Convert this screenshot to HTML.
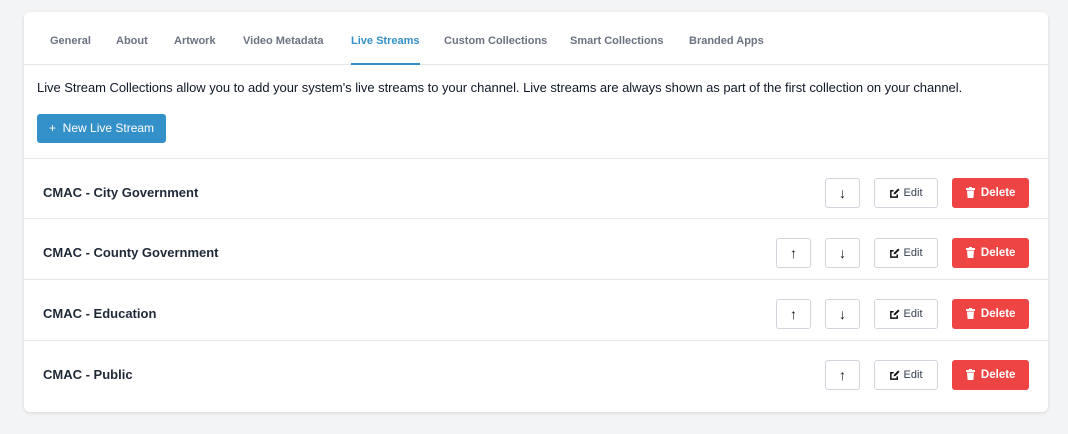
<!DOCTYPE html>
<html><head><style>
*{box-sizing:border-box;margin:0;padding:0}
body{width:1068px;height:434px;background:#f3f4f6;font-family:"Liberation Sans",sans-serif;position:relative;overflow:hidden}
.card{position:absolute;left:24px;top:12px;width:1024px;height:400px;background:#fff;border-radius:6px;box-shadow:0 1px 3px rgba(0,0,0,.12)}
.tabs{position:absolute;left:0;top:0;width:100%;height:53px;border-bottom:1px solid #e5e7eb}
.tab{position:absolute;top:23px;font-size:11px;font-weight:bold;color:#6b7280;white-space:nowrap}
.tab.act{color:#3490c9}
.uline{position:absolute;top:51px;left:327px;width:69px;height:2px;background:#3490c9}
.desc{position:absolute;left:13px;top:68px;font-size:13px;color:#111827;white-space:nowrap;letter-spacing:-0.04px}
.newbtn{position:absolute;left:13px;top:102px;width:129px;height:29px;background:#3490c9;border-radius:3px;color:#fff;font-size:12px;line-height:29px;padding-left:12px}
.row{position:absolute;left:0;width:100%;height:61px;border-top:1px solid #e5e7eb}
.name{position:absolute;left:19px;top:26px;font-size:13px;font-weight:bold;color:#1f2937}
.b{position:absolute;top:19px;height:30px;border:1px solid #d1d5db;border-radius:3px;background:#fff;font-size:11px;color:#374151;text-align:center;line-height:28px}
.ar{width:35px;font-size:14px;font-weight:bold;color:#111}
.up{left:752px}.dn{left:801px}
.ed{left:850px;width:64px}
.del{position:absolute;top:19px;left:928px;width:77px;height:30px;background:#ef4444;border-radius:3px;color:#fff;font-size:11.5px;font-weight:bold;line-height:30px;text-align:center}
svg{vertical-align:middle}
</style></head><body>
<div class="card">
<div class="tabs">
<span class="tab" style="left:26px">General</span>
<span class="tab" style="left:92px">About</span>
<span class="tab" style="left:150px">Artwork</span>
<span class="tab" style="left:219px">Video Metadata</span>
<span class="tab act" style="left:327px">Live Streams</span>
<span class="tab" style="left:420px">Custom Collections</span>
<span class="tab" style="left:546px">Smart Collections</span>
<span class="tab" style="left:665px">Branded Apps</span>
<div class="uline"></div>
</div>
<div class="desc">Live Stream Collections allow you to add your system's live streams to your channel. Live streams are always shown as part of the first collection on your channel.</div>
<div class="newbtn">+&nbsp; New Live Stream</div>

<div class="row" style="top:146px"><div class="name">CMAC - City Government</div>
<div class="b ar dn">↓</div><div class="b ed"><svg width="11" height="11" viewBox="0 0 12 12"><path d="M9 7v3H2V3h3" fill="none" stroke="#111" stroke-width="1.6"/><path d="M5 7l.5-2L10 .5l1.5 1.5L7 6.5z" fill="#111"/></svg> Edit</div><div class="del"><svg width="9" height="11" viewBox="0 0 9 11"><rect x="0" y="1" width="9" height="2" fill="#fff"/><rect x="3" y="0" width="3" height="1" fill="#fff"/><path d="M1 3.5h7l-.6 7.5H1.6z" fill="#fff"/></svg> &nbsp;Delete</div></div>

<div class="row" style="top:206px"><div class="name">CMAC - County Government</div>
<div class="b ar up">↑</div><div class="b ar dn">↓</div><div class="b ed"><svg width="11" height="11" viewBox="0 0 12 12"><path d="M9 7v3H2V3h3" fill="none" stroke="#111" stroke-width="1.6"/><path d="M5 7l.5-2L10 .5l1.5 1.5L7 6.5z" fill="#111"/></svg> Edit</div><div class="del"><svg width="9" height="11" viewBox="0 0 9 11"><rect x="0" y="1" width="9" height="2" fill="#fff"/><rect x="3" y="0" width="3" height="1" fill="#fff"/><path d="M1 3.5h7l-.6 7.5H1.6z" fill="#fff"/></svg> &nbsp;Delete</div></div>

<div class="row" style="top:267px"><div class="name">CMAC - Education</div>
<div class="b ar up">↑</div><div class="b ar dn">↓</div><div class="b ed"><svg width="11" height="11" viewBox="0 0 12 12"><path d="M9 7v3H2V3h3" fill="none" stroke="#111" stroke-width="1.6"/><path d="M5 7l.5-2L10 .5l1.5 1.5L7 6.5z" fill="#111"/></svg> Edit</div><div class="del"><svg width="9" height="11" viewBox="0 0 9 11"><rect x="0" y="1" width="9" height="2" fill="#fff"/><rect x="3" y="0" width="3" height="1" fill="#fff"/><path d="M1 3.5h7l-.6 7.5H1.6z" fill="#fff"/></svg> &nbsp;Delete</div></div>

<div class="row" style="top:328px"><div class="name">CMAC - Public</div>
<div class="b ar dn">↑</div><div class="b ed"><svg width="11" height="11" viewBox="0 0 12 12"><path d="M9 7v3H2V3h3" fill="none" stroke="#111" stroke-width="1.6"/><path d="M5 7l.5-2L10 .5l1.5 1.5L7 6.5z" fill="#111"/></svg> Edit</div><div class="del"><svg width="9" height="11" viewBox="0 0 9 11"><rect x="0" y="1" width="9" height="2" fill="#fff"/><rect x="3" y="0" width="3" height="1" fill="#fff"/><path d="M1 3.5h7l-.6 7.5H1.6z" fill="#fff"/></svg> &nbsp;Delete</div></div>
</div>
</body></html>
